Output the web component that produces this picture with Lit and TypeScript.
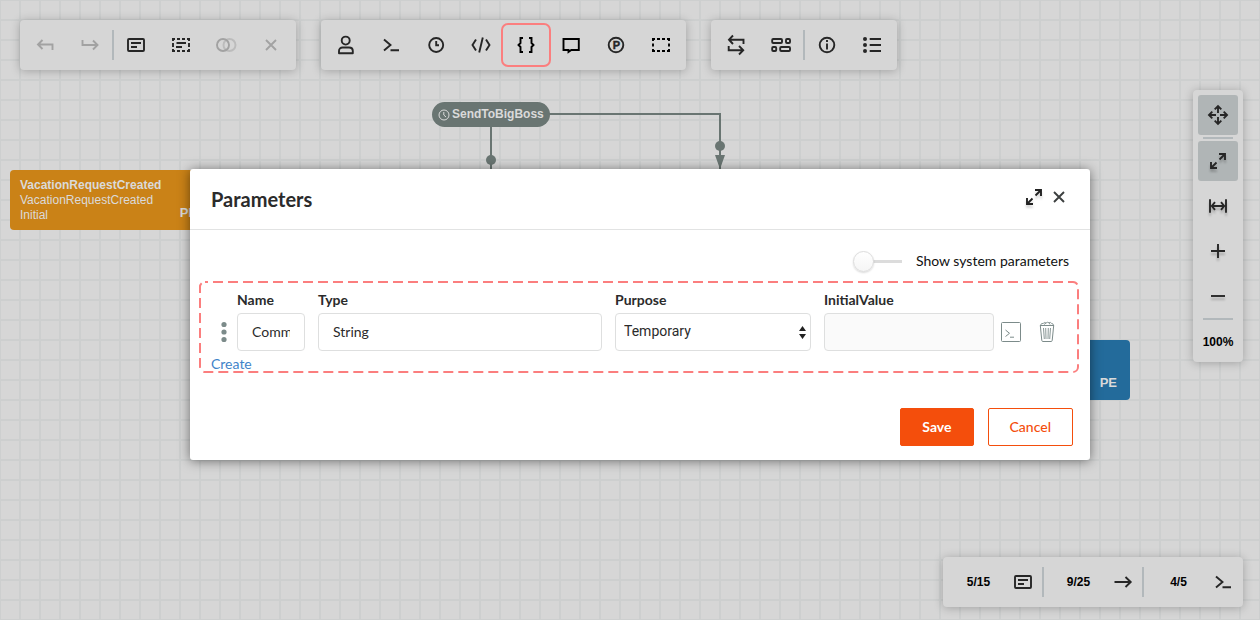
import { LitElement, html, svg, css } from "lit";
import { customElement, property } from "lit/decorators.js";

const icons: Record<string, unknown> = {
  undo: svg`<path d="M9.5 7 5 11.5 9.5 16M5.5 11.5H19.5V17"/>`,
  redo: svg`<path d="M4.5 7V12H19M15 7.5 19.5 12 15 16.5"/>`,
  note: svg`<rect x="4" y="6" width="16" height="12" rx="1"/><path d="M7 10H17M7 14H13"/>`,
  noteDashed: svg`<path d="M3 6H6M8 6H11M13 6H16M18 6H21M3 18H6M8 18H11M13 18H16M18 18H21M4 5V8M4 10V14M4 16V19M20 5V8M20 10V14M20 16V19M7.5 10H17M7 14H13"/>`,
  overlap: svg`<circle cx="15.5" cy="12" r="6" opacity=".5"/><circle cx="9" cy="12" r="6"/>`,
  close: svg`<path d="M7 7 17 17M17 7 7 17"/>`,
  user: svg`<circle cx="11.7" cy="7.6" r="4"/><path d="M5 20.3V18C5 15.8 6.6 14.5 8.5 14.5H15C17.2 14.5 18.8 15.8 18.8 18V20.3Z" stroke-linejoin="round"/>`,
  prompt: svg`<path d="M5 6.5 11.5 12 5 17.5M11.5 17.3H20"/>`,
  clock: svg`<circle cx="12.2" cy="12" r="7"/><path d="M12.2 8V12.2H15"/>`,
  code: svg`<path d="M7 6.5 3.5 12 7 17.5M13.8 4.5 10.2 19.5M17 6.5 20.5 12 17 17.5"/>`,
  braces: svg`<path d="M9 5H6.5V10L4.5 12 6.5 14V19H9M15 5H17.5V10L19.5 12 17.5 14V19H15"/>`,
  comment: svg`<path d="M4.5 6H19.8V17H12.3L9.5 19V17H4.5Z"/>`,
  parking: svg`<circle cx="12" cy="12" r="7.3"/><text class="letter" x="12.3" y="16" text-anchor="middle">P</text>`,
  area: svg`<path d="M3 6H6M8 6H11M13 6H16M18 6H21M3 18H6M8 18H11M13 18H16M18 18H21M4 5V8M4 10.5V13.5M4 16V19M20 5V8M20 10.5V13.5M20 16V19"/>`,
  swap: svg`<path d="M9 2.5 5 6.7 9 11M5 6.7H19.5V11M15 13 19.2 17.2 15 21.5M19.2 17.2H4.7V13"/>`,
  boxes: svg`<rect x="3.2" y="6" width="9.8" height="4" rx="1"/><rect x="17" y="6" width="4" height="4" rx="1"/><rect x="3.2" y="14" width="4" height="4" rx="1"/><rect x="11.2" y="14" width="9.8" height="4" rx="1"/>`,
  info: svg`<circle cx="12" cy="12" r="7.3"/><path d="M12 7V9M12 10.5V16.5"/>`,
  list: svg`<path d="M9.7 6H21M9.7 12H21M9.7 18H21"/><g class="solid"><circle cx="5" cy="6" r="2"/><circle cx="5" cy="12" r="2"/><circle cx="5" cy="18" r="2"/></g>`,
  move: svg`<path d="M12 10V3.5M8.7 6.3 12 3 15.3 6.3M12 14V20.5M8.7 17.7 12 21 15.3 17.7M10 12H3.5M6.3 8.7 3 12 6.3 15.3M14 12H20.5M17.7 8.7 21 12 17.7 15.3"/>`,
  expand: svg`<path d="M13.5 10.5 18.5 5.5M13 5H19V11M10.5 13.5 5.5 18.5M5 13V19H11"/>`,
  width: svg`<path d="M4 5.3V18.7M20 5.3V18.7M6 12H18M9 8.2 5.8 12 9 15.8M15 8.2 18.2 12 15 15.8"/>`,
  plus: svg`<path d="M5 12H19M12 5V19"/>`,
  minus: svg`<path d="M5 12H19"/>`,
  arrow: svg`<path d="M3.5 12H19.5M14.5 7 19.7 12 14.5 17"/>`,
};

@customElement("line-icon")
class LineIcon extends LitElement {
  @property() name = "";

  static styles = css`
    :host {
      display: block;
      width: 24px;
      height: 24px;
    }
    svg {
      display: block;
      width: 100%;
      height: 100%;
      fill: none;
      stroke: currentColor;
      stroke-width: 1.9;
    }
    .letter {
      font: bold 11px "Liberation Sans", sans-serif;
      fill: currentColor;
      stroke: currentColor;
      stroke-width: 0.4;
    }
    .solid {
      fill: currentColor;
      stroke: none;
    }
  `;

  render() {
    return html`<svg viewBox="0 0 24 24" aria-hidden="true">${icons[this.name]}</svg>`;
  }
}

interface Tool {
  icon: string;
  label: string;
  disabled?: boolean;
  marked?: boolean;
  active?: boolean;
  raised?: boolean;
  black?: boolean;
}

const SEPARATOR = "separator";
type Item = Tool | typeof SEPARATOR;

const topBars: Item[][] = [
  [
    { icon: "undo", label: "Undo", disabled: true },
    { icon: "redo", label: "Redo", disabled: true },
    SEPARATOR,
    { icon: "note", label: "Add activity" },
    { icon: "noteDashed", label: "Copy selected" },
    { icon: "overlap", label: "Merge", disabled: true },
    { icon: "close", label: "Delete", disabled: true },
  ],
  [
    { icon: "user", label: "Actors" },
    { icon: "prompt", label: "Commands" },
    { icon: "clock", label: "Timers" },
    { icon: "code", label: "Code actions" },
    { icon: "braces", label: "Parameters", marked: true, black: true },
    { icon: "comment", label: "Localization", black: true },
    { icon: "parking", label: "Process info" },
    { icon: "area", label: "Select area", black: true },
  ],
  [
    { icon: "swap", label: "Transitions" },
    { icon: "boxes", label: "Arrange" },
    SEPARATOR,
    { icon: "info", label: "Information" },
    { icon: "list", label: "Legend" },
  ],
];

const zoomBar: Item[] = [
  { icon: "move", label: "Pan", active: true },
  SEPARATOR,
  { icon: "expand", label: "Full screen", active: true, raised: true },
  { icon: "width", label: "Fit width", raised: true },
  { icon: "plus", label: "Zoom in", raised: true },
  { icon: "minus", label: "Zoom out", raised: true },
  SEPARATOR,
];

const counters = [
  { value: "5/15", icon: "note" },
  { value: "9/25", icon: "arrow" },
  { value: "4/5", icon: "prompt" },
];

@customElement("tool-bar")
class ToolBar extends LitElement {
  @property({ attribute: false }) items: Item[] = [];
  @property({ type: Boolean, reflect: true }) vertical = false;

  static styles = css`
    :host {
      display: flex;
      gap: 5px;
      padding: 5px;
      border-radius: 4px;
      background: #d6d6d6;
      box-shadow: 0 1px 10px rgba(0, 0, 0, 0.25);
    }
    :host([vertical]) {
      flex-direction: column;
      align-items: center;
      padding-bottom: 0;
    }
    .tool {
      position: relative;
      display: grid;
      place-items: center;
      width: 40px;
      height: 40px;
      padding: 0;
      border: 0;
      border-radius: 3px;
      background: none;
      color: #262626;
    }
    .tool.black {
      color: #000;
    }
    .tool:disabled {
      color: #a2a2a2;
    }
    .tool.active {
      background: #b0b5b6;
    }
    .tool.raised line-icon {
      filter: drop-shadow(0 3px 1px rgba(0, 0, 0, 0.2));
    }
    .tool.marked::after {
      content: "";
      position: absolute;
      inset: -2px -5px;
      border: 2px solid #fb7e7e;
      border-radius: 7px;
    }
    .separator {
      width: 2px;
      height: 30px;
      margin: 5px -3px;
      background: #b2b8bb;
    }
    :host([vertical]) .separator {
      width: 30px;
      height: 2px;
      margin: -3px 0;
    }
  `;

  render() {
    return html`${this.items.map((item) =>
        item === SEPARATOR
          ? html`<span class="separator"></span>`
          : html`<button
              class="tool ${item.marked ? "marked" : ""} ${item.active ? "active" : ""} ${item.raised ? "raised" : ""} ${item.black ? "black" : ""}"
              aria-label=${item.label}
              ?disabled=${item.disabled ?? false}
            ><line-icon name=${item.icon}></line-icon></button>`,
      )}<slot></slot>`;
  }
}

@customElement("flow-canvas")
class FlowCanvas extends LitElement {
  static styles = css`
    :host {
      position: absolute;
      inset: 0;
      overflow: hidden;
      color: #dadada;
      font: 12px/15px "Liberation Sans", Arial, sans-serif;
      background-color: #d6d6d6;
      background-image:
        linear-gradient(to right, #cdcfcf 2px, transparent 2px),
        linear-gradient(to bottom, #cdcfcf 2px, transparent 2px);
      background-size: 20px 20px;
      background-position: -1px -1px;
    }
    .links {
      position: absolute;
      left: 0;
      top: 0;
      width: 100%;
      height: 100%;
    }
    .wire {
      fill: none;
      stroke: #697572;
      stroke-width: 2;
    }
    .mark {
      fill: #697572;
    }
    .node {
      position: absolute;
      box-sizing: border-box;
      display: flex;
      justify-content: space-between;
      width: 200px;
      height: 60px;
      padding: 8px 13px 7px 10px;
      border-radius: 4px;
    }
    .created {
      left: 10px;
      top: 170px;
      background: #ca8217;
    }
    .final {
      left: 930px;
      top: 340px;
      background: #236b9b;
    }
    .flags {
      align-self: flex-end;
      font-size: 13px;
      font-weight: bold;
      line-height: 20px;
    }
    .pill {
      position: absolute;
      left: 432px;
      top: 102px;
      display: flex;
      align-items: center;
      gap: 2px;
      padding: 0 6px;
      height: 25px;
      border-radius: 13px;
      background: #697572;
      font-weight: bold;
    }
    .dial {
      width: 12px;
      height: 12px;
      fill: none;
      stroke: currentColor;
    }
  `;

  render() {
    return html`
      <svg class="links" aria-hidden="true">
        <path class="wire" d="M491 114V180M491 114H720V169" />
        <circle class="mark" cx="491" cy="160" r="5" />
        <circle class="mark" cx="720" cy="146" r="5" />
        <path class="mark" d="M715 155H725L720 169Z" />
      </svg>
      <div class="node created">
        <div><b>VacationRequestCreated</b><br />VacationRequestCreated<br />Initial</div>
        <span class="flags">PE</span>
      </div>
      <div class="node final"><span></span><span class="flags">PE</span></div>
      <div class="pill">
        <svg class="dial" viewBox="0 0 12 12" aria-hidden="true">
          <circle cx="6" cy="6" r="5" />
          <path d="M5.8 3V6L8 8" />
        </svg>
        SendToBigBoss
      </div>
    `;
  }
}

@customElement("parameters-dialog")
class ParametersDialog extends LitElement {
  static styles = css`
    :host {
      display: block;
      color: #2b2b2b;
      font: 14px/20px Lato, sans-serif;
    }
    .dialog {
      border-radius: 3px;
      background: #fff;
      box-shadow: 0 1px 12px rgba(0, 0, 0, 0.5);
    }
    .head {
      display: flex;
      align-items: center;
      gap: 4px;
      padding: 0 22px 0 21px;
      height: 60px;
      border-bottom: 1px solid #e2e3e3;
    }
    .title {
      flex: 1;
      margin: 0;
      font-size: 20px;
      line-height: 24px;
    }
    .plain {
      display: grid;
      place-items: center;
      padding: 0;
      border: 0;
      background: none;
      color: #3c3f3f;
    }
    .head .plain {
      width: 21px;
      margin-bottom: 4px;
    }
    .head .expand {
      color: #222;
      filter: drop-shadow(0 3px 1px rgba(0, 0, 0, 0.15));
    }
    .system {
      display: flex;
      justify-content: flex-end;
      align-items: center;
      gap: 14px;
      height: 21px;
      padding: 21px 21px 9px;
      color: #111;
    }
    .system label {
      padding-bottom: 2px;
    }
    .switch {
      appearance: none;
      display: flex;
      align-items: center;
      width: 49px;
      height: 21px;
      margin: 0;
      background: linear-gradient(#dcdcdc, #dcdcdc) right center / 39px 3px no-repeat;
    }
    .switch::before {
      content: "";
      box-sizing: border-box;
      width: 21px;
      height: 21px;
      border: 1px solid #dcdcdc;
      border-radius: 50%;
      background: linear-gradient(#fff, #f5f5f5);
      box-shadow: 0 1px 2px rgba(0, 0, 0, 0.15);
    }
    .params {
      position: relative;
      margin: 0 11px 0 9px;
      padding: 9px 12px 0;
      height: 83px;
    }
    .dashes {
      position: absolute;
      left: 0;
      top: 0;
      width: 100%;
      height: 100%;
      overflow: visible;
      pointer-events: none;
      fill: none;
      stroke: #fb7e7e;
      stroke-width: 2;
      stroke-dasharray: 10 5;
      stroke-dashoffset: 7;
    }
    .frame {
      x: 1px;
      y: 1px;
      width: calc(100% - 2px);
      height: calc(100% - 2px);
      rx: 5px;
    }
    .row {
      display: grid;
      grid-template-columns: 13px 68px minmax(0, 284fr) minmax(0, 196fr) minmax(0, 170fr) 60px;
      column-gap: 13px;
      row-gap: 3px;
      align-items: center;
    }
    .caption {
      font-weight: bold;
    }
    .caption.first {
      grid-column: 2;
    }
    .caption.last {
      grid-column: 5 / 7;
    }
    .grip {
      justify-self: center;
      width: 6px;
      height: 22px;
      fill: #7c8b8a;
      margin-left: 13px;
    }
    .field {
      box-sizing: border-box;
      width: 100%;
      height: 38px;
      padding: 0 14px 2px;
      border: 1px solid #dedfdf;
      border-radius: 4px;
      background: #fff;
      color: #2b2b2b;
      font: inherit;
    }
    .field:disabled {
      background: #fafafa;
    }
    .picker {
      position: relative;
    }
    .picker .field {
      display: block;
      appearance: none;
      padding: 0 24px 2px 8px;
      font: 14px Roboto, sans-serif;
    }
    .steps {
      position: absolute;
      right: 5px;
      top: 13px;
      width: 7px;
      height: 13px;
      fill: #222;
      pointer-events: none;
    }
    .actions {
      display: flex;
      align-items: center;
      gap: 16px;
      margin-left: -6px;
    }
    .actions .plain {
      color: #7c8b8a;
    }
    .glyph {
      display: block;
      fill: none;
      stroke: currentColor;
    }
    .create {
      display: inline-block;
      margin-top: 3px;
      color: #3f84c9;
      text-decoration: none;
    }
    .foot {
      display: flex;
      justify-content: flex-end;
      gap: 14px;
      padding: 35px 17px 14px;
    }
    .push {
      height: 38px;
      padding: 0 21px 2px;
      border: 1px solid #f44e0c;
      border-radius: 2px;
      background: #fff;
      color: #f44e0c;
      font: 500 14px Lato, sans-serif;
    }
    .push.main {
      background: #f44e0c;
      color: #fff;
      font-weight: bold;
    }
  `;

  render() {
    return html`
      <section class="dialog" role="dialog" aria-labelledby="title">
        <header class="head">
          <h2 class="title" id="title">Parameters</h2>
          <button class="plain expand" aria-label="Expand"><line-icon name="expand"></line-icon></button>
          <button class="plain" aria-label="Close"><line-icon name="close"></line-icon></button>
        </header>
        <div class="system">
          <input class="switch" type="checkbox" role="switch" id="system" />
          <label for="system">Show system parameters</label>
        </div>
        <div class="params">
          <svg class="dashes" aria-hidden="true"><rect class="frame" /></svg>
          <div class="row">
            <label class="caption first" for="name">Name</label>
            <label class="caption" for="type">Type</label>
            <label class="caption" for="purpose">Purpose</label>
            <label class="caption last" for="initial">InitialValue</label>
            <svg class="grip" viewBox="0 0 6 22" aria-hidden="true">
              <circle cx="3" cy="3.5" r="2.6" /><circle cx="3" cy="11" r="2.6" /><circle cx="3" cy="18.5" r="2.6" />
            </svg>
            <input class="field" id="name" value="Comment" />
            <input class="field" id="type" value="String" />
            <div class="picker">
              <select class="field" id="purpose">
                <option>Temporary</option>
              </select>
              <svg class="steps" viewBox="0 0 7 13" aria-hidden="true">
                <path d="M3.5 0 7 5H0ZM3.5 13 7 8H0Z" />
              </svg>
            </div>
            <input class="field" id="initial" disabled />
            <div class="actions">
              <button class="plain" aria-label="Edit value">
                <svg class="glyph" width="20" height="20" viewBox="0 0 20 20">
                  <rect x=".5" y=".5" width="19" height="19" rx="1" />
                  <path d="M4.5 8 8.5 11.3 4.5 14.5M9 15.2H13" />
                </svg>
              </button>
              <button class="plain" aria-label="Delete">
                <svg class="glyph" width="20" height="22" viewBox="0 0 20 22">
                  <path d="M3 4.5H17M3.3 4.5 4.8 19.5Q5 20.5 6 20.5H14Q15 20.5 15.2 19.5L16.7 4.5" />
                  <path d="M6.5 7 7.3 18M8.7 7 9 18M11.3 7 11 18M13.5 7 12.7 18" stroke-width=".9" />
                  <path d="M3.5 4.3Q4 2 6.3 2.4 7 .8 9 2 10.5.6 12 1.8 13.8.8 14.5 2.4 16.3 2.4 16.5 4.3M7 3.5 9 2M12 1.8 13 3.5" stroke-width=".9" />
                </svg>
              </button>
            </div>
          </div>
          <a class="create" href="#create">Create</a>
        </div>
        <footer class="foot">
          <button class="push main">Save</button>
          <button class="push">Cancel</button>
        </footer>
      </section>
    `;
  }
}

@customElement("app-root")
class AppRoot extends LitElement {
  static styles = css`
    :host {
      position: relative;
      display: block;
      min-height: 100vh;
      overflow: hidden;
      font: bold 12px/16px "Liberation Sans", Arial, sans-serif;
      color: #000;
    }
    .bars {
      position: relative;
      display: flex;
      flex-wrap: wrap;
      gap: 25px;
      padding: 20px;
    }
    .zoom {
      position: absolute;
      top: 90px;
      right: 17px;
    }
    .percent {
      display: grid;
      place-items: center;
      height: 40px;
    }
    .status {
      position: absolute;
      right: 17px;
      bottom: 13px;
      display: grid;
      grid-template-columns: repeat(3, 100px);
      padding: 10px 0;
      border-radius: 4px;
      background: #d6d6d6;
      box-shadow: 0 1px 10px rgba(0, 0, 0, 0.25);
    }
    .counter {
      display: grid;
      grid-template-columns: 1fr 24px;
      align-items: center;
      height: 30px;
      padding: 0 8px 0 3px;
      text-align: center;
    }
    .counter + .counter {
      margin-left: -1px;
      padding-left: 2px;
      border-left: 2px solid #b2b8bb;
    }
    .counter line-icon {
      color: #262626;
    }
    .popup {
      position: absolute;
      top: 169px;
      left: 20px;
      right: 0;
      margin: 0 auto;
      width: 900px;
      max-width: calc(100% - 40px);
    }
  `;

  render() {
    return html`
      <flow-canvas></flow-canvas>
      <nav class="bars" aria-label="Designer tools">
        ${topBars.map((items) => html`<tool-bar .items=${items}></tool-bar>`)}
      </nav>
      <tool-bar class="zoom" vertical .items=${zoomBar}><span class="percent">100%</span></tool-bar>
      <div class="status">
        ${counters.map((c) => html`<div class="counter"><span>${c.value}</span><line-icon name=${c.icon}></line-icon></div>`)}
      </div>
      <parameters-dialog class="popup"></parameters-dialog>
    `;
  }
}
